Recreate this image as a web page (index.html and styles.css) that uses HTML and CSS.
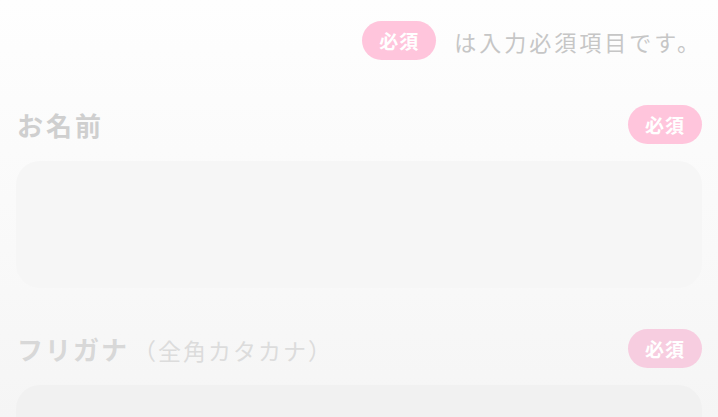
FILE: index.html
```html
<!DOCTYPE html>
<html lang="ja">
<head>
    <meta charset="UTF-8">
    <meta name="viewport" content="width=device-width, initial-scale=1.0">
    <title>お問い合わせフォーム</title>
    <link rel="stylesheet" href="styles.css">
</head>
<body>
    <form class="entry-form">
        <p class="form-note">
            <span class="badge">必須</span>
            <span class="note-text">は入力必須項目です。</span>
        </p>

        <div class="field">
            <div class="field-head">
                <label for="name" class="field-label">お名前</label>
                <span class="badge">必須</span>
            </div>
            <div class="input-box"></div>
        </div>

        <div class="field field-kana">
            <div class="field-head">
                <label for="kana" class="field-label">フリガナ<span class="label-sub">（全角カタカナ）</span></label>
                <span class="badge">必須</span>
            </div>
            <div class="input-box"></div>
        </div>
    </form>
</body>
</html>
```

FILE: styles.css
```css
body {
    font-family: "Noto Sans CJK JP", "Noto Sans", sans-serif;
    background: linear-gradient(to bottom, #fefefe 0%, #f9f9f9 60%, #f5f5f5 100%);
    margin: 0;
    padding: 0;
    height: 417px;
    overflow: hidden;
}

.entry-form {
    padding: 21px 16px 0 16px;
}

.form-note {
    display: flex;
    justify-content: flex-end;
    align-items: center;
    gap: 18px;
    margin: 0;
    padding-right: 0;
}

.note-text {
    font-size: 22px;
    letter-spacing: 3px;
    color: #c6c6c6;
}

.badge {
    display: inline-flex;
    align-items: center;
    justify-content: center;
    width: 74px;
    height: 39px;
    border-radius: 20px;
    background-color: #ffc5dc;
    color: #fff;
    font-size: 19px;
    font-weight: bold;
    letter-spacing: 1px;
}

.field {
    margin-top: 45px;
}

.field-kana {
    margin-top: 41px;
}

.field-head {
    display: flex;
    justify-content: space-between;
    align-items: center;
    height: 39px;
}

.field-label {
    font-size: 26px;
    font-weight: bold;
    letter-spacing: 3px;
    color: #cfcfcf;
    padding-left: 1px;
}

.field-kana .field-label {
    color: #d8d8d8;
    letter-spacing: 2px;
}

.field-kana .badge {
    background-color: #f7cde0;
}

.label-sub {
    margin-left: 4px;
    font-size: 23px;
    font-weight: normal;
    letter-spacing: 2px;
    color: #dcdcdc;
}

.input-box {
    margin-top: 17px;
    height: 127px;
    border-radius: 24px;
    background-color: #f6f6f6;
}

.field-kana .input-box {
    background-color: #f1f1f1;
}
```
